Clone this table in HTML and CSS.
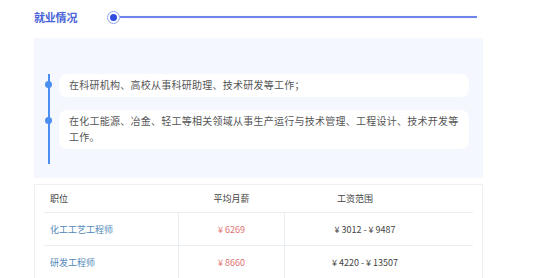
FILE: index.html
```html
<!DOCTYPE html>
<html lang="zh">
<head>
<meta charset="utf-8">
<link rel="stylesheet" href="styles.css">
</head>
<body>
<div class="wrap">
  <div class="sec-head">
    <span class="sec-title">就业情况</span>
    <span class="sec-dot"></span>
    <span class="sec-line"></span>
  </div>
  <div class="panel">
    <div class="timeline">
      <div class="card">在科研机构、高校从事科研助理、技术研发等工作；</div>
      <div class="card">在化工能源、冶金、轻工等相关领域从事生产运行与技术管理、工程设计、技术开发等工作。</div>
    </div>
  </div>
  <div class="table">
    <div class="row head">
      <div class="c1">职位</div>
      <div class="c2">平均月薪</div>
      <div class="c3">工资范围</div>
    </div>
    <div class="row body">
      <div class="c1 job">化工工艺工程师</div>
      <div class="c2 pay">¥ 6269</div>
      <div class="c3 range">¥ 3012 - ¥ 9487</div>
    </div>
    <div class="row body">
      <div class="c1 job">研发工程师</div>
      <div class="c2 pay">¥ 8660</div>
      <div class="c3 range">¥ 4220 - ¥ 13507</div>
    </div>
  </div>
</div>
</body>
</html>
```
FILE: styles.css
```css
html, body { margin: 0; padding: 0; background: #fff; }
body { font-family: "Noto Sans CJK SC", "Noto Sans", sans-serif; }
.wrap { margin-left: 34px; width: 449px; }
.sec-head { display: flex; align-items: center; height: 22px; margin-top: 6px; margin-bottom: 10px; }
.sec-title { font-size: 11px; font-weight: bold; color: #4862d8; line-height: 22px; letter-spacing: -0.2px; }
.sec-dot { position: relative; width: 11px; height: 11px; border: 1px solid #8fa1f2; border-radius: 50%; margin-left: 30px; box-sizing: content-box; flex: none; display: flex; align-items: center; justify-content: center; }
.sec-dot::after { content: ""; width: 7px; height: 7px; border-radius: 50%; background: #2f4ee0; }
.sec-line { flex: 1; height: 1.5px; background: #7184ee; margin-right: 6px; box-shadow: 0 0 1px #c4cdf8; }
.panel { background: #f4f7fd; padding: 36px 14px 14px 14px; }
.timeline { border-left: 2px solid #4a8ef0; padding-left: 9px; padding-bottom: 15px; display: flex; flex-direction: column; gap: 13px; }
.card { position: relative; background: #fff; border-radius: 8px; padding: 3px 10px 4px; font-size: 10px; line-height: 16px; color: #555; letter-spacing: 0.25px; }
.card::before { content: ""; position: absolute; left: -14.5px; top: 7px; width: 7px; height: 7px; border-radius: 50%; background: #4a8ef0; }
.table { margin-top: 6px; border: 1px solid #eef0f2; border-bottom: none; padding: 0 9px; height: 100px; }
.row { display: grid; grid-template-columns: 134px 107px 190px; font-size: 9px; box-sizing: border-box; }
.row > div { display: flex; align-items: center; }
.head { height: 28px; border-bottom: 1px solid #e9eef2; color: #444; }
.body { height: 33px; border-bottom: 1px solid #e9eef2; }
.c1 { padding-left: 6px; }
.c2 { justify-content: center; }
.c3 { justify-content: center; }
.head .c3 { padding-right: 50px; }
.body .c2 { border-left: 1px solid #e9eef2; border-right: 1px solid #e9eef2; }
.body .c3 { padding-right: 30px; }
.job { color: #4f87b8; }
.pay { color: #e07272; }
.range { color: #444; }
```
